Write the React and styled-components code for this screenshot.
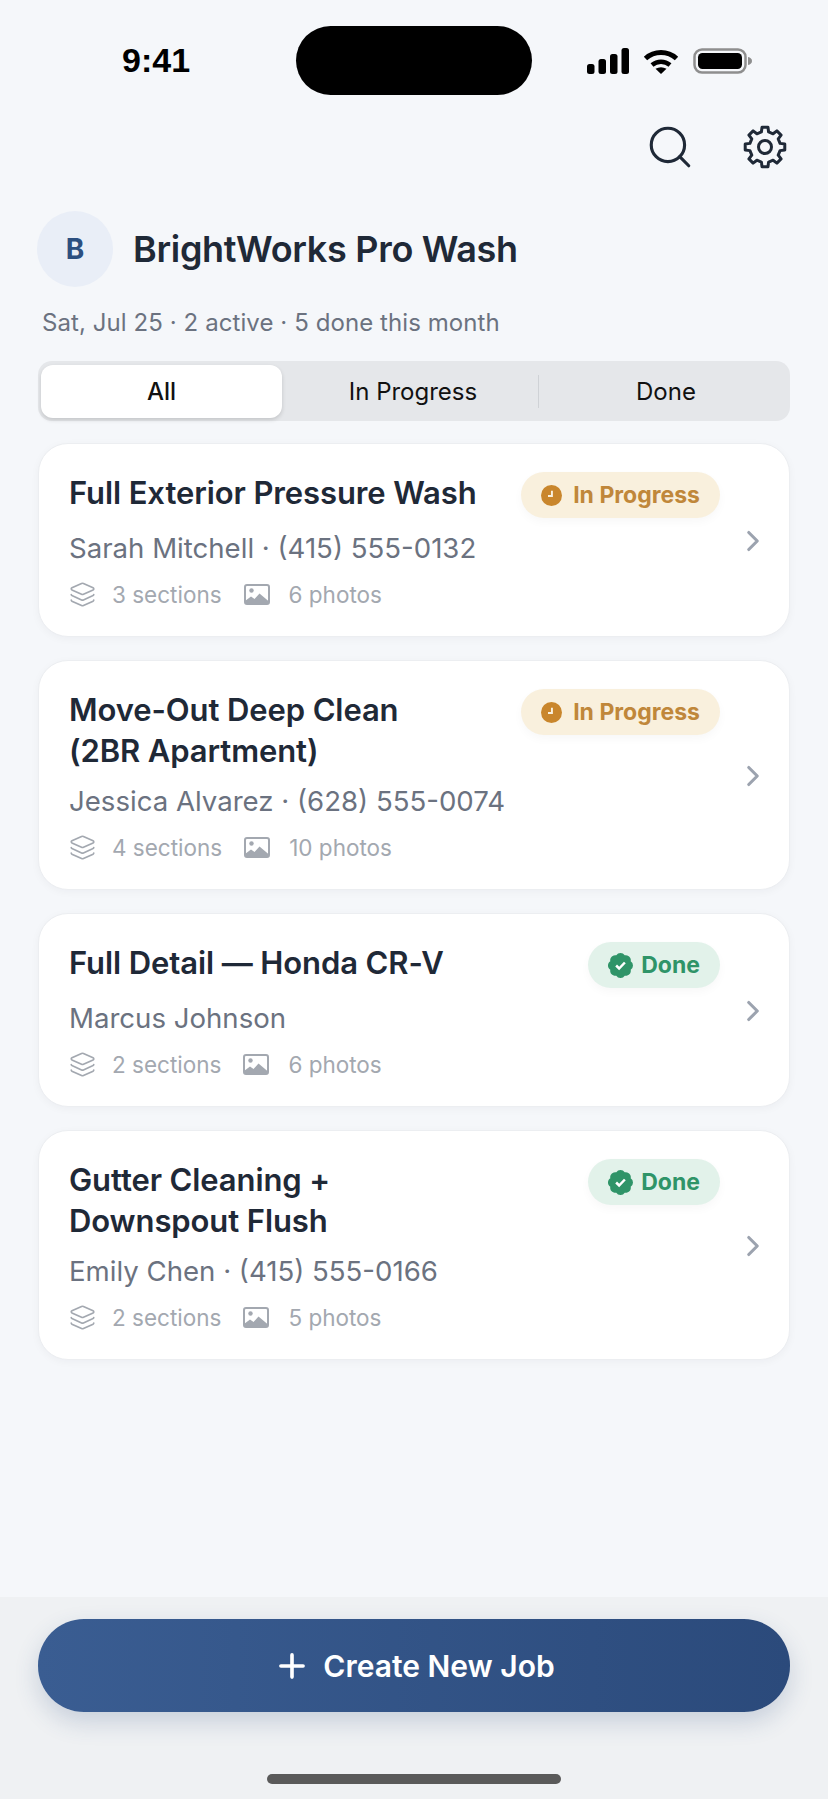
// Libraries
import React from 'react';
import styled, { createGlobalStyle } from 'styled-components';
import { Search, Layers, ChevronRight, Plus } from 'lucide-react';

const jobs = [
  { title: 'Full Exterior Pressure Wash', customer: 'Sarah Mitchell · (415) 555-0132', sections: '3 sections', photos: '6 photos', status: 'progress' },
  { title: 'Move-Out Deep Clean\n(2BR Apartment)', customer: 'Jessica Alvarez · (628) 555-0074', sections: '4 sections', photos: '10 photos', status: 'progress' },
  { title: 'Full Detail — Honda CR-V', customer: 'Marcus Johnson', sections: '2 sections', photos: '6 photos', status: 'done' },
  { title: 'Gutter Cleaning +\nDownspout Flush', customer: 'Emily Chen · (415) 555-0166', sections: '2 sections', photos: '5 photos', status: 'done' },
];

// Outline of the 8 tooth cog, walked tooth by tooth around the centre
const gearPoints = () => {
  const corners = [[15.5, -13.5], [20, -8.5], [20, 8.5], [15.5, 13.5]];
  const points = [];
  for (let i = 0; i < 8; i++) {
    corners.forEach(([radius, offset]) => {
      const angle = ((i * 45 + offset - 90) * Math.PI) / 180;
      points.push(`${(22 + radius * Math.cos(angle)).toFixed(2)},${(22 + radius * Math.sin(angle)).toFixed(2)}`);
    });
  }
  return points.join(' ');
};

const GearIcon = () => (
  <svg width="44" height="44" viewBox="0 0 44 44" fill="none" stroke="#1f2937" strokeWidth="3" strokeLinejoin="round">
    <polygon points={gearPoints()} />
    <circle cx="22" cy="22" r="6.500" />
  </svg>
);

const ClockIcon = () => (
  <svg width="21" height="21" viewBox="0 0 24 24">
    <circle cx="12" cy="12" r="12" fill="#c9862c" />
    <path d="M12.500 6.500v6H8" fill="none" stroke="#f9f0dd" strokeWidth="2.200" />
  </svg>
);

const VerifiedIcon = () => (
  <svg width="25" height="25" viewBox="2 2 20 20">
    <path
      d="M3.850 8.620a4 4 0 0 1 4.780-4.770 4 4 0 0 1 6.740 0 4 4 0 0 1 4.780 4.780 4 4 0 0 1 0 6.740 4 4 0 0 1-4.770 4.780 4 4 0 0 1-6.750 0 4 4 0 0 1-4.780-4.770 4 4 0 0 1 0-6.760Z"
      fill="#2f9468"
    />
    <path d="m8.500 12 2.400 2.400 4.600-4.800" fill="none" stroke="#fff" strokeWidth="2" />
  </svg>
);

const PhotoIcon = () => (
  <svg width="29" height="21" viewBox="0 0 29 21">
    <rect x="1" y="1" width="24" height="19" rx="2" fill="none" stroke="#a3a8b0" strokeWidth="2" />
    <circle cx="7.500" cy="6.500" r="2.200" fill="#a3a8b0" />
    <path d="M1 20v-3l6-4.500 3.500 2.500 5-5.500 9.500 8v2.500Z" fill="#a3a8b0" />
  </svg>
);

const SignalIcon = () => (
  <svg width="42" height="26" viewBox="0 0 42 26">
    <rect x="0" y="16" width="7.500" height="10" rx="2.500" />
    <rect x="11.500" y="11" width="7.500" height="15" rx="2.500" />
    <rect x="23" y="6" width="7.500" height="20" rx="2.500" />
    <rect x="34.500" y="0" width="7.500" height="26" rx="2.500" />
  </svg>
);

const WifiIcon = () => (
  <svg width="36" height="26" viewBox="0 0 36 26">
    <path d="M2.500 10.500a23 23 0 0 1 31 0" fill="none" stroke="#000" strokeWidth="5" />
    <path d="M9 17a14 14 0 0 1 18 0" fill="none" stroke="#000" strokeWidth="4.500" />
    <path d="M12.500 20.800q5.500-3.300 11 0L18 26Z" />
  </svg>
);

const BatteryIcon = () => (
  <svg width="59" height="26" viewBox="0 0 59 26">
    <rect x="1.500" y="1.500" width="51" height="23" rx="7.500" fill="none" stroke="#8e8e8e" strokeWidth="2.500" />
    <rect x="5" y="5" width="44" height="16" rx="4.500" fill="#000" />
    <path d="M55 9c2.500.5 4 2 4 4s-1.500 3.500-4 4Z" fill="#8e8e8e" />
  </svg>
);

const App = () => {
  return (
    <Page>
      <GlobalStyle />
      <StatusBar>
        <Time>9:41</Time>
        <Island />
        <StatusIcons>
          <SignalIcon />
          <WifiIcon />
          <BatteryIcon />
        </StatusIcons>
      </StatusBar>

      <Toolbar>
        <Search size={50} strokeWidth={1.5} color="#1f2937" />
        <GearIcon />
      </Toolbar>

      <Brand>
        <Avatar>B</Avatar>
        <BrandName>BrightWorks Pro Wash</BrandName>
      </Brand>
      <Summary>Sat, Jul 25 · 2 active · 5 done this month</Summary>

      <Tabs>
        <Tab $active>All</Tab>
        <Tab>In Progress</Tab>
        <TabDivider />
        <Tab>Done</Tab>
      </Tabs>

      <JobList>
        {jobs.map((job) => (
          <JobCard key={job.title}>
            <JobBody>
              <JobTop>
                <JobTitle>{job.title}</JobTitle>
                <Badge $status={job.status}>
                  {job.status === 'done' ? <VerifiedIcon /> : <ClockIcon />}
                  {job.status === 'done' ? 'Done' : 'In Progress'}
                </Badge>
              </JobTop>
              <Customer>{job.customer}</Customer>
              <Meta>
                <MetaItem>
                  <Layers size={27} strokeWidth={1.5} color="#a3a8b0" />
                  {job.sections}
                </MetaItem>
                <MetaItem>
                  <PhotoIcon />
                  {job.photos}
                </MetaItem>
              </Meta>
            </JobBody>
            <ChevronRight size={34} strokeWidth={2.2} color="#9ca3af" />
          </JobCard>
        ))}
      </JobList>

      <Footer>
        <CreateButton>
          <Plus size={38} strokeWidth={2.3} />
          Create New Job
        </CreateButton>
        <HomeBar />
      </Footer>
    </Page>
  );
};

export default App;

const GlobalStyle = createGlobalStyle`
  body {
    margin: 0;
    background: #f5f7fa;
    font-family: Inter, "Liberation Sans", sans-serif;
  }
`;

const Page = styled.div`
  width: 828px;
  height: 1799px;
  display: flex;
  flex-direction: column;
  overflow: hidden;
  background: #f5f7fa;
`;

const StatusBar = styled.div`
  display: flex;
  align-items: center;
  height: 69px;
  margin-top: 26px;
  padding-left: 122px;
`;

const Time = styled.div`
  width: 174px;
  font-family: "Liberation Sans", sans-serif;
  font-size: 34px;
  font-weight: 700;
  color: #000;
`;

const Island = styled.div`
  width: 236px;
  height: 69px;
  border-radius: 35px;
  background: #000;
`;

const StatusIcons = styled.div`
  display: flex;
  align-items: center;
  gap: 14px;
  margin-left: 55px;
`;

const Toolbar = styled.div`
  display: flex;
  justify-content: flex-end;
  align-items: center;
  gap: 48px;
  height: 50px;
  margin-top: 27px;
  padding-right: 41px;
`;

const Brand = styled.div`
  display: flex;
  align-items: center;
  gap: 20px;
  margin-top: 39px;
  padding-left: 37px;
`;

const Avatar = styled.div`
  display: flex;
  align-items: center;
  justify-content: center;
  width: 76px;
  height: 76px;
  border-radius: 50%;
  background: #e9eef7;
  color: #2c4f80;
  font-size: 28px;
  font-weight: 700;
`;

const BrandName = styled.div`
  font-size: 36px;
  font-weight: 600;
  letter-spacing: -0.3px;
  color: #1f2937;
`;

const Summary = styled.div`
  margin-top: 19px;
  padding-left: 42px;
  font-size: 24px;
  letter-spacing: 0.08px;
  line-height: 34px;
  color: #6b7280;
`;

const Tabs = styled.div`
  display: grid;
  grid-template-columns: 241px 256px 1px 248px;
  align-items: center;
  height: 60px;
  margin: 21px 38px 0;
  padding: 0 3px;
  box-sizing: border-box;
  border-radius: 14px;
  background: #e5e7ea;
`;

const Tab = styled.div`
  display: flex;
  align-items: center;
  justify-content: center;
  height: 53px;
  padding-left: ${(props) => (props.$active ? '0' : '6px')};
  border-radius: 12px;
  font-size: 24px;
  font-weight: ${(props) => (props.$active ? 500 : 400)};
  color: #111;
  background: ${(props) => (props.$active ? '#fff' : 'transparent')};
  box-shadow: ${(props) => (props.$active ? '0 2px 4px rgba(0, 0, 0, 0.15)' : 'none')};
`;

const TabDivider = styled.div`
  height: 33px;
  background: #cfd2d6;
`;

const JobList = styled.div`
  display: flex;
  flex-direction: column;
  gap: 23px;
  margin: 22px 38px 0;
`;

const JobCard = styled.div`
  display: flex;
  align-items: center;
  padding: 28px 19px 27px 30px;
  border: 1px solid #eceef1;
  border-radius: 30px;
  background: #fff;
  box-shadow: 0 2px 8px rgba(17, 24, 39, 0.04);
`;

const JobBody = styled.div`
  flex: 1;
  min-width: 0;
  padding-right: 16px;
`;

const JobTop = styled.div`
  display: flex;
  justify-content: space-between;
  align-items: flex-start;
`;

const JobTitle = styled.div`
  font-size: 31px;
  font-weight: 600;
  letter-spacing: -0.1px;
  line-height: 41px;
  color: #1f2937;
  white-space: pre-line;
`;

const Badge = styled.div`
  display: flex;
  align-items: center;
  gap: ${(props) => (props.$status === 'done' ? '8px' : '11px')};
  height: 46px;
  padding: 0 20px;
  border-radius: 23px;
  font-size: 23px;
  font-weight: 700;
  color: ${(props) => (props.$status === 'done' ? '#2f9468' : '#c0873a')};
  background: ${(props) => (props.$status === 'done' ? '#e2f2ea' : '#f9f0dd')};
  box-shadow: 0 4px 10px rgba(17, 24, 39, 0.03);
`;

const Customer = styled.div`
  margin-top: 12px;
  font-size: 27.6px;
  line-height: 36px;
  color: #6b7280;
`;

const Meta = styled.div`
  display: flex;
  gap: 22px;
  height: 30px;
  margin-top: 13px;
`;

const MetaItem = styled.div`
  display: flex;
  align-items: center;
  gap: 16px;
  font-size: 22.500px;
  color: #a3a8b0;
`;

const Footer = styled.div`
  flex: 1;
  margin-top: 237px;
  padding: 22px 38px 0;
  background: #eff1f3;
`;

const CreateButton = styled.div`
  display: flex;
  align-items: center;
  justify-content: center;
  gap: 12px;
  height: 93px;
  border-radius: 46px;
  background: linear-gradient(90deg, #3a5d92, #2b4a7b);
  box-shadow: 0 10px 24px rgba(43, 74, 123, 0.2);
  color: #fff;
  font-size: 30px;
  font-weight: 600;
`;

const HomeBar = styled.div`
  width: 294px;
  height: 10px;
  margin: 62px auto 0;
  border-radius: 5px;
  background: #5a5a5a;
`;
